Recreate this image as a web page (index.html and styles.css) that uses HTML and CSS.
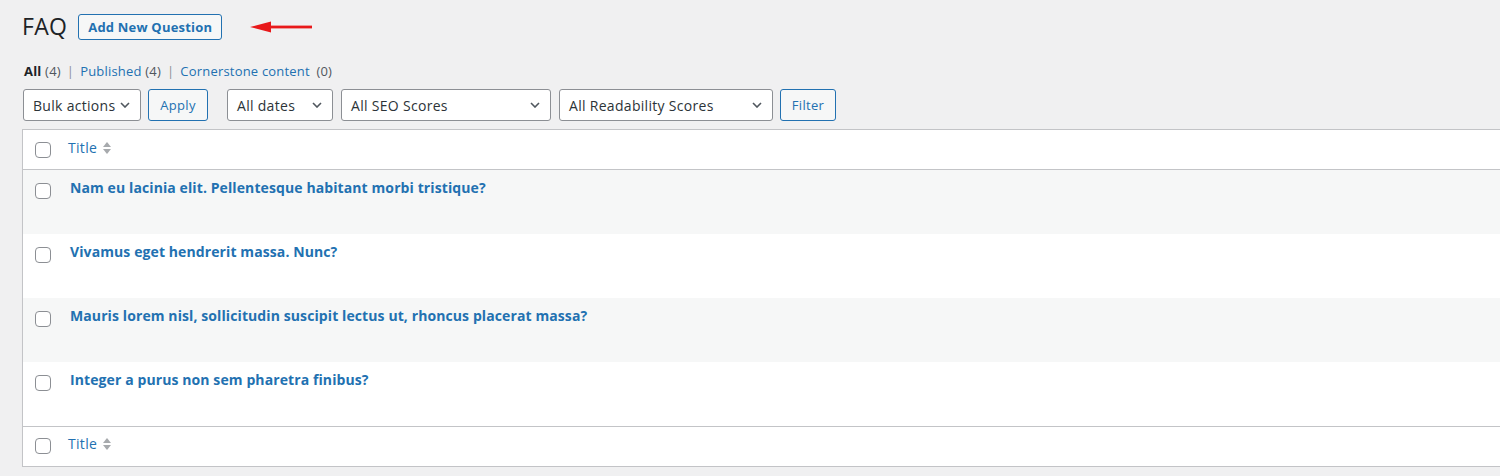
FILE: index.html
```html
<!DOCTYPE html>
<html lang="en">
<head>
<meta charset="utf-8">
<title>FAQ</title>
<link rel="stylesheet" href="styles.css">
</head>
<body>
<div class="wrap">
  <div class="heading-row">
    <h1 class="page-title">FAQ</h1>
    <a class="page-title-action" href="#">Add New Question</a>
    <svg class="annot-arrow" width="62" height="12" viewBox="0 0 62 12" aria-hidden="true">
      <polygon points="0,6 21,0.5 21,11.5" fill="#e8191b"/>
      <rect x="19" y="4.6" width="43" height="2.8" fill="#e8191b"/>
    </svg>
  </div>

  <ul class="subsubsub">
    <li><a class="current" href="#">All <span class="count">(4)</span></a><span class="sep">|</span></li>
    <li><a href="#">Published <span class="count">(4)</span></a><span class="sep">|</span></li>
    <li><a href="#">Cornerstone content</a> <span class="count">(0)</span></li>
  </ul>

  <div class="tablenav">
    <div class="select w-bulk"><span>Bulk actions</span><svg class="chev" width="10" height="6" viewBox="0 0 10 6"><polyline points="1,1 5,5 9,1" fill="none" stroke="#50575e" stroke-width="1.6"/></svg></div>
    <button class="button">Apply</button>
    <div class="select w-dates"><span>All dates</span><svg class="chev" width="10" height="6" viewBox="0 0 10 6"><polyline points="1,1 5,5 9,1" fill="none" stroke="#50575e" stroke-width="1.6"/></svg></div>
    <div class="select w-seo"><span>All SEO Scores</span><svg class="chev" width="10" height="6" viewBox="0 0 10 6"><polyline points="1,1 5,5 9,1" fill="none" stroke="#50575e" stroke-width="1.6"/></svg></div>
    <div class="select w-read"><span>All Readability Scores</span><svg class="chev" width="10" height="6" viewBox="0 0 10 6"><polyline points="1,1 5,5 9,1" fill="none" stroke="#50575e" stroke-width="1.6"/></svg></div>
    <button class="button btn-filter">Filter</button>
  </div>

  <div class="list-table">
    <div class="row head">
      <span class="cb"></span>
      <a class="col-title" href="#">Title <span class="sort"><i class="up"></i><i class="down"></i></span></a>
    </div>
    <div class="row item alt">
      <span class="cb"></span>
      <a class="row-title" href="#">Nam eu lacinia elit. Pellentesque habitant morbi tristique?</a>
    </div>
    <div class="row item">
      <span class="cb"></span>
      <a class="row-title" href="#">Vivamus eget hendrerit massa. Nunc?</a>
    </div>
    <div class="row item alt">
      <span class="cb"></span>
      <a class="row-title" href="#">Mauris lorem nisl, sollicitudin suscipit lectus ut, rhoncus placerat massa?</a>
    </div>
    <div class="row item">
      <span class="cb"></span>
      <a class="row-title" href="#">Integer a purus non sem pharetra finibus?</a>
    </div>
    <div class="row foot">
      <span class="cb"></span>
      <a class="col-title" href="#">Title <span class="sort"><i class="up"></i><i class="down"></i></span></a>
    </div>
  </div>
</div>
</body>
</html>
```
FILE: styles.css
```css
* { box-sizing: border-box; }
html, body {
  margin: 0;
  padding: 0;
  background: #f0f0f1;
  overflow: hidden;
}
body {
  font-family: "Open Sans", "Noto Sans", sans-serif;
  color: #3c434a;
  font-size: 13px;
}
a { text-decoration: none; color: #2271b1; }

.wrap {
  padding: 13px 0 0 22px;
}

.heading-row {
  display: flex;
  align-items: center;
  height: 27px;
}
.page-title {
  margin: 0;
  font-size: 23px;
  font-weight: 400;
  color: #1d2327;
  line-height: 27px;
  letter-spacing: 0.3px;
}
.page-title-action {
  margin-left: 11px;
  height: 26px;
  display: inline-flex;
  align-items: center;
  padding: 0 9px;
  border: 1px solid #2271b1;
  border-radius: 3px;
  background: #f6f7f7;
  font-size: 13px;
  font-weight: 700;
  letter-spacing: 0.2px;
  color: #2271b1;
}
.annot-arrow {
  margin-left: 28px;
  margin-top: 1px;
}

.subsubsub {
  list-style: none;
  margin: 22px 0 0 2px;
  padding: 0;
  display: flex;
  height: 18px;
  line-height: 18px;
  font-size: 13px;
  letter-spacing: 0.2px;
}
.subsubsub li { white-space: nowrap; }
.subsubsub .current { color: #1d2327; font-weight: 700; }
.subsubsub .count { color: #50575e; font-weight: 400; }
.subsubsub .sep { color: #8c8f94; margin: 0 6px; }
.subsubsub li:last-child .count { margin-left: 3px; }

.tablenav {
  margin-top: 9px;
  display: flex;
  align-items: center;
  height: 32px;
}
.select {
  height: 32px;
  border: 1px solid #8c8f94;
  border-radius: 3px;
  background: #fff;
  display: flex;
  align-items: center;
  justify-content: space-between;
  padding: 0 10px 0 9px;
  font-size: 14px;
  letter-spacing: 0.3px;
  color: #2c3338;
}
.chev { flex: none; }
.w-bulk { width: 118px; margin-left: 1px; }
.w-dates { width: 106px; margin-left: 19px; }
.w-seo { width: 210px; margin-left: 8px; }
.w-read { width: 214px; margin-left: 8px; }
.button {
  height: 32px;
  margin-left: 7px;
  padding: 0 10px;
  border: 1px solid #2271b1;
  border-radius: 3px;
  background: #f6f7f7;
  color: #2271b1;
  font-family: inherit;
  font-size: 13px;
  letter-spacing: 0.3px;
  width: 60px;
}
.btn-filter { width: 56px; margin-left: 7px; }

.list-table {
  margin-top: 8px;
  width: 1500px;
  background: #fff;
  border: 1px solid #c3c4c7;
  box-shadow: 0 1px 1px rgba(0,0,0,.04);
}
.row {
  display: flex;
  align-items: flex-start;
}
.row.head { height: 40px; border-bottom: 1px solid #c3c4c7; }
.row.foot { height: 40px; border-top: 1px solid #c3c4c7; }
.row.item { height: 64px; }
.row.alt { background: #f6f7f7; }

.cb {
  flex: none;
  width: 16px;
  height: 16px;
  margin-left: 12px;
  border: 1px solid #8c8f94;
  border-radius: 4px;
  background: #fff;
}
.row.head .cb { margin-top: 12px; }
.row.foot .cb { margin-top: 11px; }
.row.item .cb { margin-top: 13px; }

.col-title {
  margin-left: 17px;
  margin-top: 8px;
  font-size: 14px;
  line-height: 20px;
  letter-spacing: 0.3px;
  display: flex;
  align-items: center;
}
.row.foot .col-title { margin-top: 7px; }
.sort {
  display: inline-flex;
  flex-direction: column;
  margin-left: 6px;
  gap: 2px;
}
.sort i {
  width: 0;
  height: 0;
  border-left: 4px solid transparent;
  border-right: 4px solid transparent;
}
.sort .up { border-bottom: 5px solid #a7aaad; }
.sort .down { border-top: 5px solid #a7aaad; }

.row-title {
  margin-left: 19px;
  margin-top: 8px;
  font-size: 14px;
  line-height: 20px;
  font-weight: 700;
  letter-spacing: 0.1px;
  color: #2271b1;
}
```
